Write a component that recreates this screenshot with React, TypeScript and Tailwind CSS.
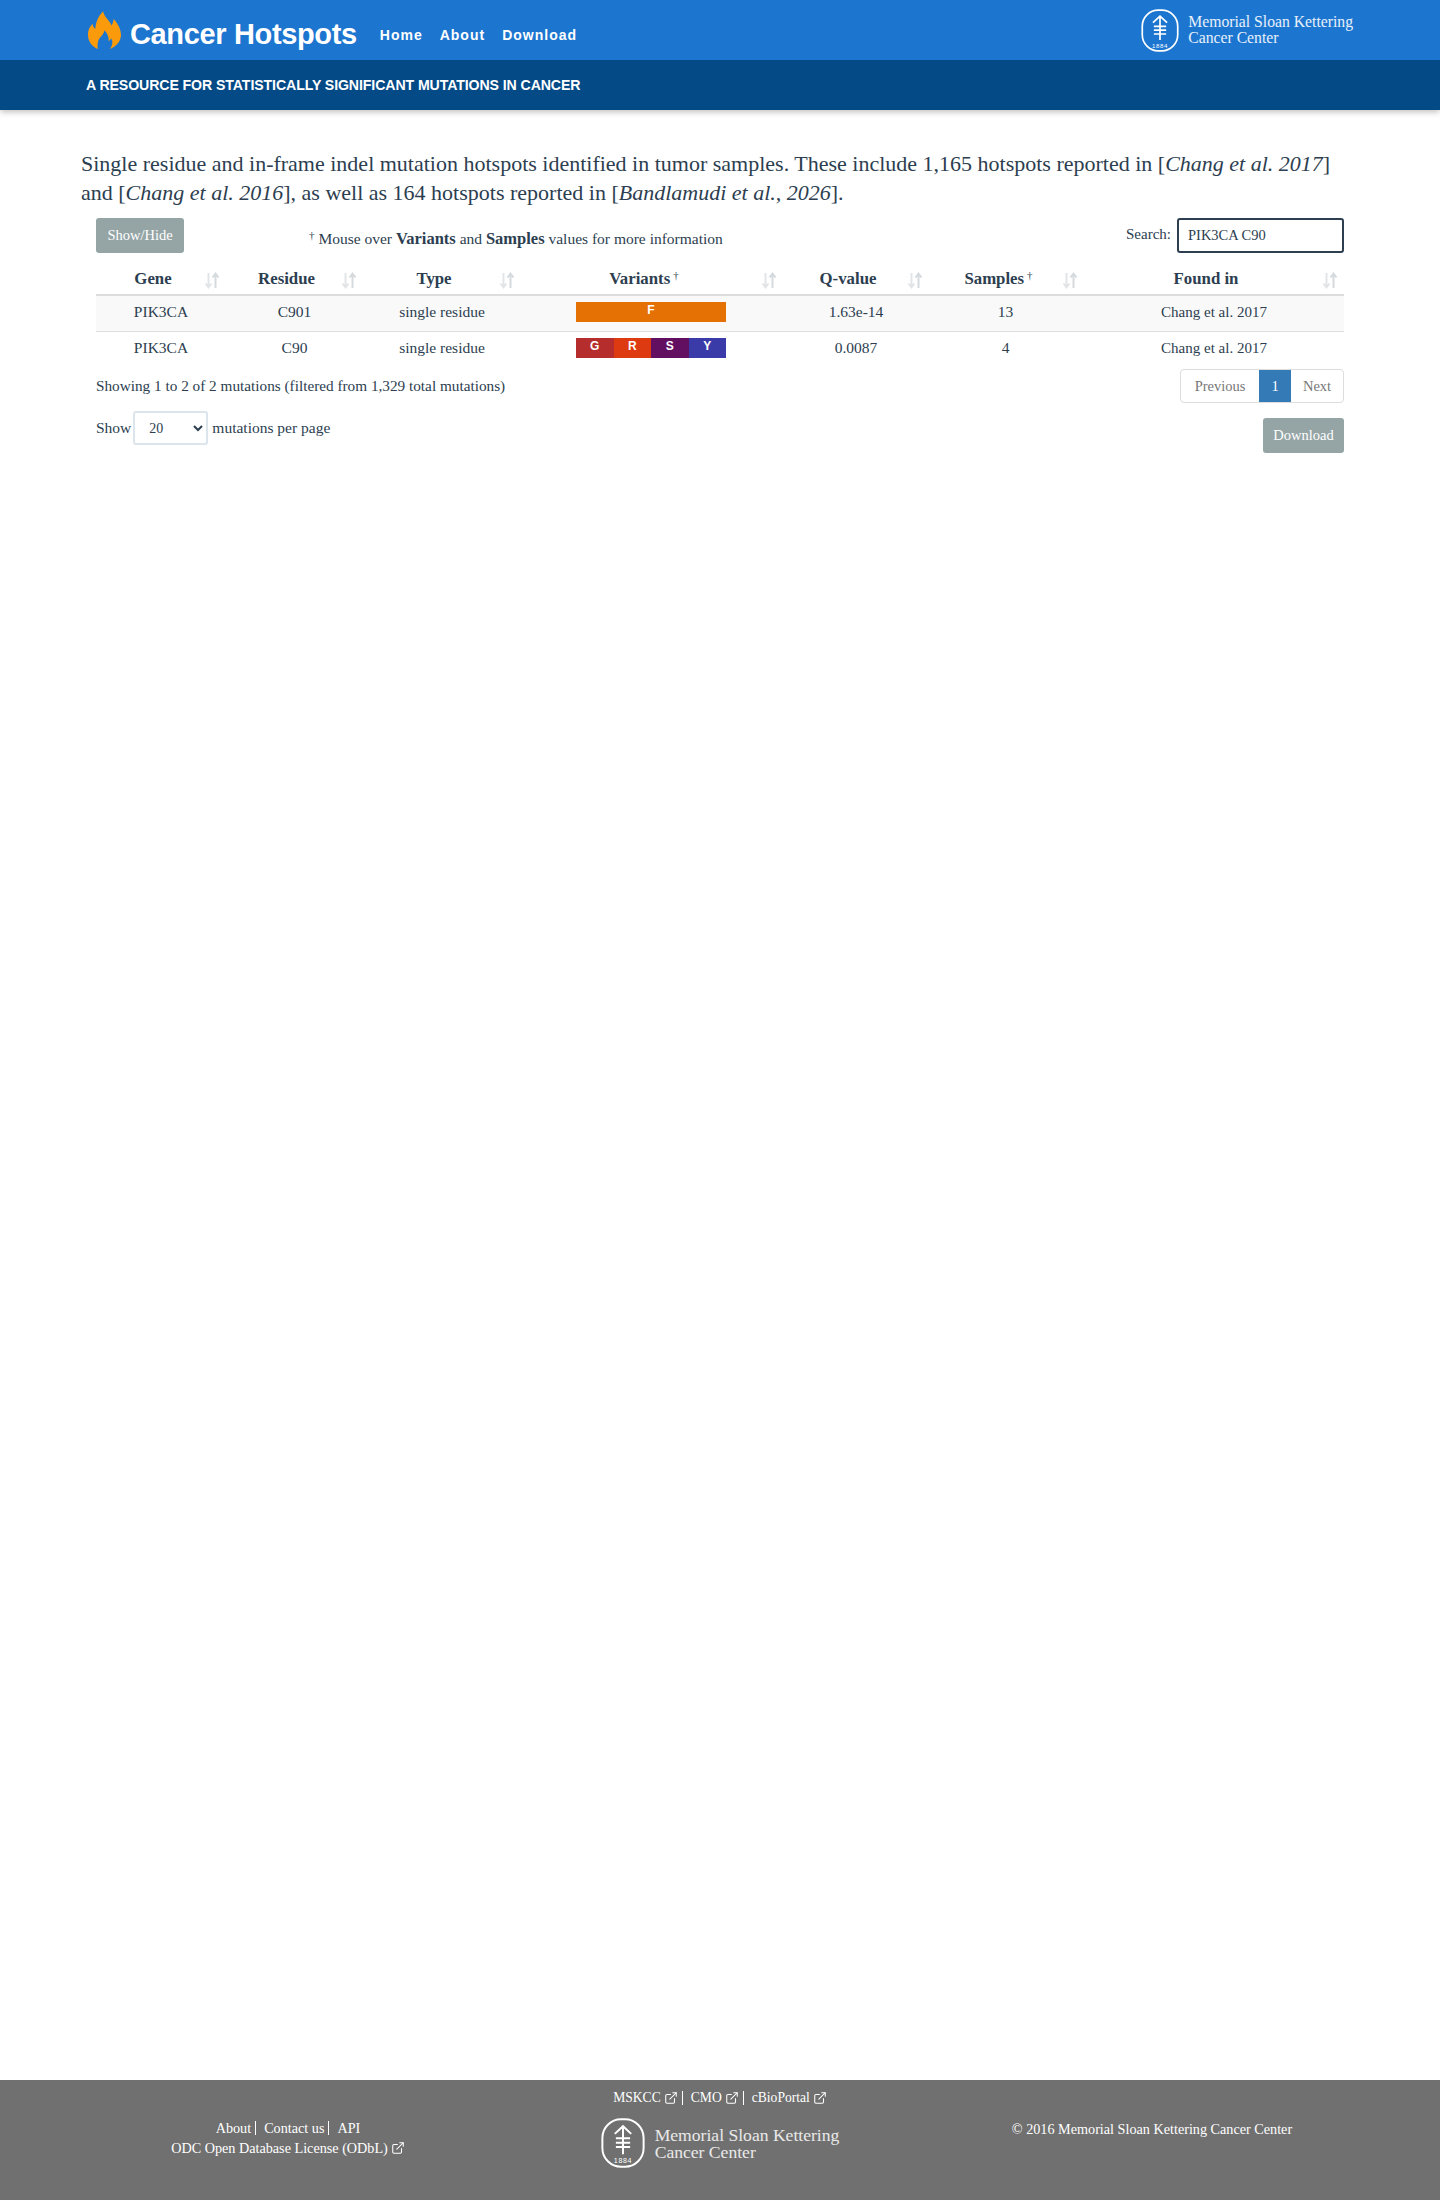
import React from "react";
import { ExternalLink } from "lucide-react";

const serif = "font-['Liberation_Serif',serif]";

const MskLogo: React.FC<{ size: number }> = ({ size }) => (
  <svg width={size} height={Math.round(size * 1.14)} viewBox="0 0 40 45.6" fill="none" stroke="currentColor" className="shrink-0">
    <rect x="1.2" y="1.2" width="37.6" height="43.2" rx="17" strokeWidth="1.8" />
    <path d="M20 7v26M12.5 14.5 20 7.5l7.5 7M13.5 18.5h13M13.5 22.5h13M13.5 26.5h13" strokeWidth="1.8" />
    <text x="20" y="41" textAnchor="middle" fontSize="6.5" fill="currentColor" stroke="none" fontFamily="Liberation Sans, sans-serif" letterSpacing="0.6">
      1884
    </text>
  </svg>
);

const Flame: React.FC = () => (
  <svg width="33" height="39" viewBox="0 0 94 110" className="mr-[9px] ml-[2px] shrink-0">
    <path
      d="M28 108C10 100 0 85 0 68 0 52 6 44 13 36c1 7 3 12 8 14C22 30 30 14 43 0c3 14 11 20 18 30 3 4 5 8 6 11 3-5 5-11 6-19 13 14 21 30 21 46 0 18-14 34-32 40 8-10 10-22 4-30-2 4-4 6-7 7 1-13-5-23-12-31-1 10-11 18-17 28-3 8-3 18-2 26z"
      fill="#fb9a0b"
    />
  </svg>
);

const SortIcon: React.FC = () => (
  <svg width="16" height="17" viewBox="0 0 16 17" fill="none" className="absolute right-[6px] top-[10px]">
    <path d="M4.5 1v14M1.5 11.5l3 3.8 3-3.8" stroke="#e2e5e8" strokeWidth="2" />
    <path d="M11.5 16V2M8.5 5.5l3-3.8 3 3.8" stroke="#d5dade" strokeWidth="2" />
  </svg>
);

const columns = [
  { label: "Gene", width: "w-[130px]" },
  { label: "Residue", width: "w-[137px]" },
  { label: "Type", width: "w-[158px]" },
  { label: "Variants", width: "w-[262px]", dagger: true },
  { label: "Q-value", width: "w-[146px]" },
  { label: "Samples", width: "w-[155px]", dagger: true },
  { label: "Found in", width: "w-[260px]" },
];

const rows = [
  { gene: "PIK3CA", residue: "C901", qvalue: "1.63e-14", samples: "13", variants: [{ aa: "F", color: "bg-[#e57104]" }] },
  {
    gene: "PIK3CA",
    residue: "C90",
    qvalue: "0.0087",
    samples: "4",
    variants: [
      { aa: "G", color: "bg-[#b52d2d]" },
      { aa: "R", color: "bg-[#de3a12]" },
      { aa: "S", color: "bg-[#620f62]" },
      { aa: "Y", color: "bg-[#3a3aa8]" },
    ],
  },
];

const FooterLink: React.FC<{ label: string; last?: boolean; external?: boolean }> = ({ label, last, external }) => (
  <span className={`inline-flex items-center leading-[14px] ${last ? "" : "border-r border-white pr-[4px] mr-[8px]"}`}>
    {label}
    {external && <ExternalLink size={14} className="ml-[3px]" strokeWidth={1.8} />}
  </span>
);

const App: React.FC = () => {
  return (
    <div className={`relative min-h-[2200px] flex flex-col bg-white text-[#2c3e50] ${serif}`}>
      <header className="shadow-[0_2px_6px_rgba(0,0,0,0.25)]">
        <div className="h-[60px] bg-[#1c75cf] flex items-center justify-between pl-[86px] pr-[87px] text-white">
          <div className="flex items-center font-['Liberation_Sans',sans-serif] font-bold">
            <Flame />
            <span className="text-[29px] tracking-[-0.35px] mr-[23px] mt-[10px]">Cancer Hotspots</span>
            <nav className="flex gap-[17px] text-[14px] tracking-[1px] mt-[10px]">
              <span>Home</span>
              <span>About</span>
              <span>Download</span>
            </nav>
          </div>
          <div className="flex items-center gap-[9px]">
            <MskLogo size={38} />
            <div className="text-[15.7px] leading-[16px] text-white/90">
              <div>Memorial Sloan Kettering</div>
              <div>Cancer Center</div>
            </div>
          </div>
        </div>
        <div className="h-[50px] bg-[#044a87] flex items-center pl-[86px] pt-[1px] text-white font-['Liberation_Sans',sans-serif] font-bold text-[14.15px] tracking-[-0.1px]">
          A RESOURCE FOR STATISTICALLY SIGNIFICANT MUTATIONS IN CANCER
        </div>
      </header>

      <main className="flex-1 pl-[81px] pr-[96px] pt-[39px]">
        <p className="text-[22px] leading-[29px]">
          Single residue and in-frame indel mutation hotspots identified in tumor samples. These include 1,165 hotspots reported in [<i>Chang et al. 2017</i>]
          and [<i>Chang et al. 2016</i>], as well as 164 hotspots reported in [<i>Bandlamudi et al., 2026</i>].
        </p>

        <div className="ml-[15px] mt-[11px] text-[15.5px]">
          <div className="flex items-start h-[44px]">
            <button className="w-[88px] h-[35px] rounded-[3px] bg-[#95a5a6] text-white text-[14.5px]">Show/Hide</button>
            <div className="ml-[125px] mt-[9px]">
              <sup className="text-[11px]">†</sup> Mouse over <b className="text-[16.5px]">Variants</b> and <b className="text-[16.5px]">Samples</b> values for more information
            </div>
            <label className="ml-auto flex items-start">
              <span className="mr-[6px] mt-[5px] text-[15px]">Search:</span>
              <input
                readOnly
                value="PIK3CA C90"
                className="w-[167px] h-[35px] rounded-[3px] border-2 border-[#2c3e50] px-[9px] text-[14.5px] outline-none"
              />
            </label>
          </div>

          <table className="table-fixed w-full border-collapse">
            <thead>
              <tr className="h-[33px] border-b-2 border-[#dddddd]">
                {columns.map((c) => (
                  <th key={c.label} className={`${c.width} relative pr-[16px] pt-[2px] text-center font-bold text-[16.8px]`}>
                    {c.label}
                    {c.dagger && <sup className="ml-[3px] text-[11px] font-normal">†</sup>}
                    <SortIcon />
                  </th>
                ))}
              </tr>
            </thead>
            <tbody>
              {rows.map((r, i) => (
                <tr key={r.residue} className={`h-[36px] border-b border-[#dddddd] last:border-b-0 ${i === 0 ? "bg-[#f9f9f9]" : ""}`}>
                  <td className="text-center pb-[3px]">{r.gene}</td>
                  <td className="text-center pb-[3px]">{r.residue}</td>
                  <td className="text-center pb-[3px]">single residue</td>
                  <td className="pb-[3px] pr-[2px]">
                    <div className="mx-auto flex w-[150px] h-[20px] font-['Liberation_Sans',sans-serif] font-bold text-[12px] text-white">
                      {r.variants.map((v) => (
                        <span key={v.aa} className={`flex-1 text-center leading-[17px] ${v.color}`}>
                          {v.aa}
                        </span>
                      ))}
                    </div>
                  </td>
                  <td className="text-center pb-[3px]">{r.qvalue}</td>
                  <td className="text-center pb-[3px] pr-[2px]">{r.samples}</td>
                  <td className="text-center pb-[3px] text-[15px]">Chang et al. 2017</td>
                </tr>
              ))}
            </tbody>
          </table>

          <div className="flex items-start justify-between mt-[2px]">
            <div className="mt-[6px] text-[15.25px]">Showing 1 to 2 of 2 mutations (filtered from 1,329 total mutations)</div>
            <div className="flex h-[34px] w-[164px] text-[14.5px] text-[#777777] rounded-[4px] border border-[#dddddd] overflow-hidden leading-[32px] text-center">
              <span className="w-[78px]">Previous</span>
              <span className="w-[32px] bg-[#337ab7] text-white">1</span>
              <span className="flex-1">Next</span>
            </div>
          </div>

          <div className="flex items-start justify-between mt-[8px]">
            <div className="flex items-center">
              <span>Show</span>
              <select className="w-[75px] h-[34px] ml-[2px] mr-[4px] rounded-[3px] border-2 border-[#dce4ec] bg-white pl-[10px] text-[14px]">
                <option>20</option>
              </select>
              <span>mutations per page</span>
            </div>
            <button className="mt-[7px] w-[81px] h-[35px] rounded-[3px] bg-[#95a5a6] text-white text-[14.5px]">Download</button>
          </div>
        </div>
      </main>

      <footer className="h-[120px] bg-[#707070] text-white text-[14.2px] pt-[11px]">
        <div className="flex justify-center text-[13.6px]">
          <FooterLink label="MSKCC" external />
          <FooterLink label="CMO" external />
          <FooterLink label="cBioPortal" external last />
        </div>
        <div className="grid grid-cols-3 items-start mt-[5px] px-[72px]">
          <div className="flex flex-col items-center gap-[6px] pt-[11px]">
            <div className="flex justify-center">
              <FooterLink label="About" />
              <FooterLink label="Contact us" />
              <FooterLink label="API" last />
            </div>
            <FooterLink label="ODC Open Database License (ODbL)" external last />
          </div>
          <div className="flex items-center justify-center gap-[10px] pt-[8px]">
            <MskLogo size={44} />
            <div className="text-[17.6px] leading-[17px] text-white/85 pt-[2px]">
              <div>Memorial Sloan Kettering</div>
              <div>Cancer Center</div>
            </div>
          </div>
          <div className="text-center pt-[9px]">© 2016 Memorial Sloan Kettering Cancer Center</div>
        </div>
      </footer>
    </div>
  );
};

export default App;
